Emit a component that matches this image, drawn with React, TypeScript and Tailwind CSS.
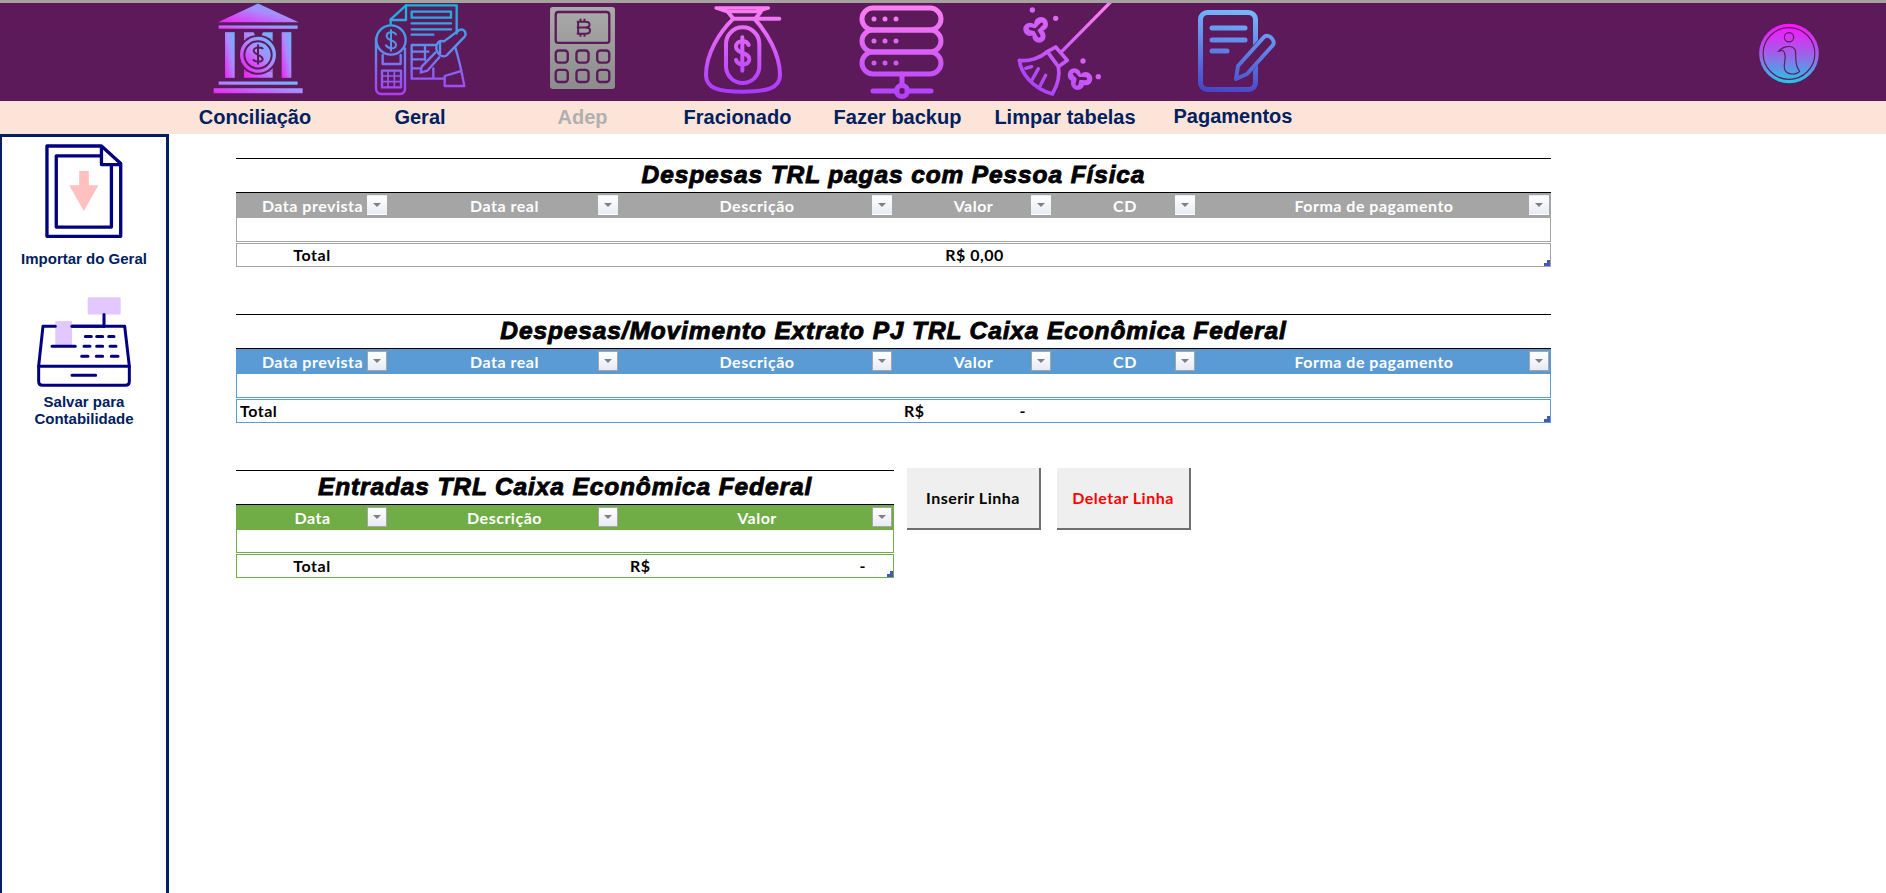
import React from "react";

const navLabel = "font-['Liberation_Sans',Arial,sans-serif] font-bold text-[20px] leading-none text-[#002060] text-center whitespace-nowrap mb-[2px]";
const cellFont = "font-['Lato',sans-serif] font-bold text-[16px] tracking-[0.5px] leading-none";
const gridCols = "grid grid-cols-[175px_160px_170px_155px_155px_165px_170px_166px_1fr]";

function BankIcon() {
  return (
    <svg viewBox="100 8 270 272" className="block w-[90px] h-[91px] ml-[6px] mt-0">
      <defs>
        <linearGradient id="bank" x1="0" y1="1" x2="1" y2="0">
          <stop offset="0" stopColor="#f020f5" />
          <stop offset="0.55" stopColor="#a98cff" />
          <stop offset="1" stopColor="#66b8ff" />
        </linearGradient>
      </defs>
      <g fill="url(#bank)">
        <path d="M235 9L357 65H115Z" />
        <rect x="117" y="75" width="237" height="10" />
        <rect x="136" y="95" width="29" height="137" />
        <rect x="306" y="95" width="29" height="137" />
        <path d="M193 95h29l8 18h12l8-18h29v18h-86zM193 214h86v18h-86z" />
        <path d="M193 113h86v101h-86z" />
      </g>
      <circle cx="235" cy="163" r="60" fill="#5d1a5b" />
      <circle cx="235" cy="163" r="49" fill="none" stroke="url(#bank)" strokeWidth="10" />
      <circle cx="235" cy="163" r="38" fill="url(#bank)" />
      <path d="M250 146c-3-6-26-8-28 4s30 14 27 27c-3 10-24 8-29-1M235 132v60" fill="none" stroke="#5d1a5b" strokeWidth="6" />
      <path d="M117 243h237v10H117zM102 263h267v15H102z" fill="url(#bank)" />
    </svg>
  );
}

function GeralIcon() {
  return (
    <svg viewBox="0 9 315 294" className="block w-[105px] h-[98px] ml-[5px]">
      <defs>
        <linearGradient id="geralU" gradientUnits="userSpaceOnUse" x1="150" y1="12" x2="150" y2="285">
          <stop offset="0" stopColor="#10b8dc" />
          <stop offset="0.5" stopColor="#5f8cf0" />
          <stop offset="1" stopColor="#b03cf8" />
        </linearGradient>
      </defs>
      <g fill="none" stroke="url(#geralU)" strokeWidth="7" strokeLinejoin="round" strokeLinecap="round">
        <path d="M62 72V58L108 16H260V100" />
        <path d="M108 16V60H62" />
        <rect x="125" y="35" width="118" height="18" />
        <path d="M125 70H243M125 88H243M125 104H190" />
        <path d="M125 135H195M125 135V236H222M125 155H175M125 178H165M125 205H150M165 135V180M190 236V205" />
        <path d="M255 140C268 180 276 220 283 258H224V228L270 214" />
        <path d="M200 135C205 122 215 122 222 124L268 90C280 84 292 98 284 110L232 164C225 172 212 170 205 160C198 152 198 143 200 135Z" />
        <path d="M210 124V160" />
        <path d="M196 158L155 200L152 218L172 212L208 172" />
        <path d="M18 115V265Q18 282 35 282H90Q105 282 105 265V145" />
        <circle cx="63" cy="120" r="44" fill="#5d1a5b" />
        <path d="M78 103C70 92 50 95 50 108C50 124 78 118 78 134C78 148 56 148 48 136M63 90V152" strokeWidth="6" />
        <path d="M38 165V192H92V165" />
        <rect x="36" y="212" width="57" height="50" />
        <path d="M54 212V262M73 212V262M36 228H93M36 245H93" strokeWidth="5" />
      </g>
    </svg>
  );
}

function AdepIcon() {
  return (
    <svg viewBox="1112 22 194 245" className="block w-[65px] h-[82px] mt-[4px]">
      <defs>
        <linearGradient id="adep" x1="0" y1="0" x2="0" y2="1">
          <stop offset="0" stopColor="#aaaaaa" />
          <stop offset="1" stopColor="#8c8c8c" />
        </linearGradient>
      </defs>
      <rect x="1112" y="22" width="194" height="245" rx="8" fill="url(#adep)" />
      <g fill="none" stroke="#5d1a5b" strokeWidth="7">
        <rect x="1129" y="37" width="160" height="92" rx="8" />
        <rect x="1129" y="152" width="36" height="36" rx="9" />
        <rect x="1191" y="152" width="36" height="36" rx="9" />
        <rect x="1253" y="152" width="36" height="36" rx="9" />
        <rect x="1129" y="210" width="36" height="36" rx="9" />
        <rect x="1191" y="210" width="36" height="36" rx="9" />
        <rect x="1253" y="210" width="36" height="36" rx="9" />
        <path d="M1192 66H1218C1234 66 1234 83 1218 83H1192M1218 83C1236 83 1236 102 1218 102H1192M1196 66V102M1203 57V66M1215 57V66M1203 102V111M1215 102V111" strokeWidth="6" />
      </g>
    </svg>
  );
}

function BagIcon() {
  return (
    <svg viewBox="0 9 270 294" className="block w-[90px] h-[98px] ml-[15px]">
      <defs>
        <linearGradient id="bag" gradientUnits="userSpaceOnUse" x1="130" y1="15" x2="130" y2="280">
          <stop offset="0" stopColor="#ff80f2" />
          <stop offset="1" stopColor="#a838ff" />
        </linearGradient>
      </defs>
      <g fill="none" stroke="url(#bag)" strokeWidth="12" strokeLinecap="round" strokeLinejoin="round">
        <path d="M48 24C60 26 72 35 84 35H168C180 35 192 26 205 24Z" strokeWidth="10" />
        <path d="M84 36L100 56M182 36L166 56" />
        <path d="M100 56H238" />
        <path d="M98 58C60 95 18 160 18 225C18 265 55 275 128 275C200 275 240 265 240 225C240 160 198 95 165 58" />
        <rect x="78" y="82" width="100" height="167" rx="50" />
        <path d="M146 135C140 118 108 120 108 140C108 162 148 155 148 178C148 198 114 198 108 180M127 112V212" />
      </g>
    </svg>
  );
}

function ServerIcon() {
  return (
    <svg viewBox="858 3 88 96" className="block w-[88px] h-[96px] ml-[8px]">
      <defs>
        <linearGradient id="srv" gradientUnits="userSpaceOnUse" x1="900" y1="5" x2="900" y2="98">
          <stop offset="0" stopColor="#ff80f2" />
          <stop offset="1" stopColor="#b040fa" />
        </linearGradient>
      </defs>
      <g fill="none" stroke="url(#srv)" strokeWidth="5" strokeLinecap="round">
        <rect x="862" y="8" width="79" height="22" rx="11" />
        <rect x="862" y="30" width="79" height="22" rx="11" />
        <rect x="862" y="52" width="79" height="22" rx="11" />
        <path d="M902 74V85M873 91H897M907 91H931" />
        <circle cx="902" cy="91" r="5.500" />
      </g>
      <g fill="url(#srv)">
        <circle cx="874" cy="19" r="2.500" /><circle cx="885" cy="19" r="2.500" /><circle cx="896" cy="19" r="2.500" />
        <circle cx="874" cy="41" r="2.500" /><circle cx="885" cy="41" r="2.500" /><circle cx="896" cy="41" r="2.500" />
        <circle cx="874" cy="63" r="2.500" /><circle cx="885" cy="63" r="2.500" /><circle cx="896" cy="63" r="2.500" />
      </g>
    </svg>
  );
}

function BroomIcon() {
  return (
    <svg viewBox="0 9 315 294" className="block w-[105px] h-[98px] ml-[5px]">
      <defs>
        <linearGradient id="brm" gradientUnits="userSpaceOnUse" x1="270" y1="10" x2="60" y2="280">
          <stop offset="0" stopColor="#ff80f2" />
          <stop offset="1" stopColor="#a840fa" />
        </linearGradient>
      </defs>
      <g fill="none" stroke="url(#brm)" strokeLinecap="round" strokeLinejoin="round">
        <path d="M285 8L140 155" strokeWidth="10" />
        <path d="M97 155L122 141L157 181L130 200Z" strokeWidth="11" />
        <path d="M97 155C75 175 40 185 13 181C18 222 55 265 112 282C125 260 136 230 130 200" strokeWidth="11" />
        <path d="M32 205L50 200M52 238L70 206M75 258L92 226" strokeWidth="10" />
      </g>
      <g fill="url(#brm)">
        <circle cx="78" cy="72" r="21" />
        <circle cx="45" cy="88" r="20" />
        <circle cx="72" cy="108" r="20" />
        <circle cx="178" cy="225" r="20" />
        <circle cx="212" cy="236" r="20" />
        <circle cx="188" cy="250" r="20" />
        <circle cx="52" cy="30" r="8" />
        <circle cx="122" cy="55" r="8" />
        <circle cx="204" cy="183" r="8" />
        <circle cx="250" cy="230" r="8" />
      </g>
      <path d="M62 90L80 72M62 90L46 86M62 90L72 108M190 235L178 222M190 235L212 236M190 235L186 252" stroke="#5d1a5b" strokeWidth="9" strokeLinecap="round" fill="none" />
    </svg>
  );
}

function PaperIcon() {
  return (
    <svg viewBox="1197 8 80 85" className="block w-[80px] h-[85px] ml-[8px] mt-[5px]">
      <defs>
        <linearGradient id="pap" gradientUnits="userSpaceOnUse" x1="1235" y1="10" x2="1225" y2="92">
          <stop offset="0" stopColor="#72b8ff" />
          <stop offset="1" stopColor="#4a45c8" />
        </linearGradient>
      </defs>
      <rect x="1200.500" y="12.500" width="55" height="77" rx="7" fill="none" stroke="url(#pap)" strokeWidth="5" />
      <path d="M1212 28H1245M1212 40H1245M1212 51H1227" stroke="url(#pap)" strokeWidth="5" strokeLinecap="round" />
      <path d="M1264 37L1272 44L1247 74L1236 79L1238 66Z" fill="#5d1a5b" stroke="#5d1a5b" strokeWidth="5" />
      <path d="M1264 37C1268 33 1276 40 1273 45L1247 74L1236 79L1238 66Z" fill="#5d1a5b" stroke="url(#pap)" strokeWidth="4" strokeLinejoin="round" />
    </svg>
  );
}

function InfoIcon() {
  return (
    <svg viewBox="177 68 180 184" className="block w-[60px] h-[61px] mt-[20px]">
      <defs>
        <linearGradient id="inf" x1="0" y1="0" x2="0" y2="1">
          <stop offset="0" stopColor="#ff10ff" />
          <stop offset="0.5" stopColor="#a060e8" />
          <stop offset="1" stopColor="#20c8e8" />
        </linearGradient>
      </defs>
      <circle cx="267" cy="160" r="90" fill="url(#inf)" />
      <g fill="none" stroke="#5d1a5b" strokeWidth="3.500">
        <circle cx="267" cy="160" r="78" />
        <circle cx="267" cy="111" r="14" />
        <path d="M236 153C248 138 278 132 286 150C290 170 282 195 299 213C290 225 262 226 254 208C248 190 264 165 250 152C246 149 240 152 236 153Z" />
      </g>
    </svg>
  );
}

function ImportIcon() {
  return (
    <svg viewBox="130 50 245 295" className="block w-[82px] h-[98px]">
      <g fill="none" stroke="#000080" strokeWidth="10" strokeLinejoin="round">
        <path d="M141 62H305L363 115V334H141Z" />
        <path d="M305 92H169V306H335V118" />
        <path d="M305 62V118H363" />
      </g>
      <path d="M238 137H267V180H296L252 258L208 180H238Z" fill="#ffc0c0" />
    </svg>
  );
}

function RegisterIcon() {
  return (
    <svg viewBox="104 515 288 275" className="block w-[96px] h-[92px]">
      <rect x="259" y="518" width="99" height="52" rx="4" fill="#e2c8ff" />
      <rect x="162" y="590" width="50" height="75" fill="#e2c8ff" />
      <g fill="none" stroke="#000080" strokeWidth="9" strokeLinecap="round" strokeLinejoin="round">
        <path d="M308 570V605" />
        <path d="M162 605H125L112 725H384L370 605H212" />
        <path d="M212 605H308" />
        <path d="M112 725V770Q112 782 124 782H372Q384 782 384 770V725" />
        <path d="M212 752H283M152 665H222" />
        <path d="M252 636H270M286 636H304M322 636H338M248 665H266M286 665H304M326 665H344M241 695H260M285 695H304M330 695H350" />
      </g>
    </svg>
  );
}

function Caret({ border }: { border: string }) {
  return (
    <span className={`flex items-center justify-center w-[20px] h-[20px] border bg-gradient-to-b from-[#ffffff] to-[#e8ebf4] ${border}`}>
      <span className="w-0 h-0 border-l-[4px] border-r-[4px] border-t-[4px] border-l-transparent border-r-transparent border-t-[#808080]" />
    </span>
  );
}

function HeaderCell({ label, border }: { label: string; border: string }) {
  return (
    <div className="flex items-center justify-center relative h-full">
      <span className={`${cellFont} text-white`}>{label}</span>
      <span className="absolute right-[2px] top-[2px]">
        <Caret border={border} />
      </span>
    </div>
  );
}

function ResizeHandle() {
  return (
    <svg viewBox="0 0 6 6" className="absolute right-0 bottom-0 w-[6px] h-[6px]">
      <path d="M0 6V3H3V0H6V6Z" fill="#4158b8" />
    </svg>
  );
}

const sixCols = "grid grid-cols-[153px_231px_274px_159px_144px_1fr]";
const threeCols = "grid grid-cols-[153px_231px_1fr]";
const sixHeads = ["Data prevista", "Data real", "Descrição", "Valor", "CD", "Forma de pagamento"];

function TableShell({
  title,
  heads,
  cols,
  headBg,
  line,
  caret,
  total,
  width,
  bodyHeight = "h-[24px]",
}: {
  title: string;
  heads: string[];
  cols: string;
  headBg: string;
  line: string;
  caret: string;
  total: React.ReactNode;
  width: string;
  bodyHeight?: string;
}) {
  return (
    <div className={width}>
      <div className="border-t border-black h-[34px] flex items-center justify-center">
        <span className="font-['Liberation_Sans',Arial,sans-serif] font-bold italic text-[24.5px] leading-none tracking-[0.88px] text-black [-webkit-text-stroke:0.9px_black] whitespace-nowrap">
          {title}
        </span>
      </div>
      <div className={`${cols} ${headBg} h-[26px] border-t border-black`}>
        {heads.map((h) => (
          <HeaderCell key={h} label={h} border={caret} />
        ))}
      </div>
      <div className={`${bodyHeight} border-x border-b ${line}`} />
      <div className={`relative h-[24px] mt-px border ${line}`}>
        {total}
        <ResizeHandle />
      </div>
    </div>
  );
}

export default function App() {
  return (
    <div className="w-[1886px] h-[893px] overflow-hidden flex flex-col bg-white">
      <div className="h-[3px] bg-[#a6a29e] shrink-0" />
      <div className={`${gridCols} h-[98px] bg-[#5d1a5b] shrink-0 overflow-hidden`}>
        <div />
        <div className="flex justify-center"><BankIcon /></div>
        <div className="flex justify-center"><GeralIcon /></div>
        <div className="flex justify-center"><AdepIcon /></div>
        <div className="flex justify-center"><BagIcon /></div>
        <div className="flex justify-center"><ServerIcon /></div>
        <div className="flex justify-center"><BroomIcon /></div>
        <div className="flex justify-center"><PaperIcon /></div>
        <div className="flex justify-end pr-[67px]"><InfoIcon /></div>
      </div>
      <div className={`${gridCols} h-[33px] bg-[#fde4d8] shrink-0 items-center`}>
        <div />
        <div className={navLabel}>Conciliação</div>
        <div className={navLabel}>Geral</div>
        <div className={`${navLabel} !text-[#b0b0b0]`}>Adep</div>
        <div className={navLabel}>Fracionado</div>
        <div className={navLabel}>Fazer backup</div>
        <div className={navLabel}>Limpar tabelas</div>
        <div className={`${navLabel} !mb-[4px]`}>Pagamentos</div>
        <div />
      </div>
      <div className="flex flex-1 min-h-0">
        <aside className="w-[169px] shrink-0 border-l-2 border-l-[#002060] border-r-[3px] border-r-[#002060] border-t-[3px] border-t-[#002060] flex flex-col items-center font-['Liberation_Sans',Arial,sans-serif] font-bold text-[15px] leading-[17px] text-[#002060] text-center">
          <div className="mt-[5px]"><ImportIcon /></div>
          <div className="mt-[10px]">Importar do Geral</div>
          <div className="mt-[29px]"><RegisterIcon /></div>
          <div className="mt-[5px]">Salvar para<br />Contabilidade</div>
        </aside>
        <main className="flex-1 pl-[67px] pt-[24px] flex flex-col gap-[47px]">
          <TableShell
            width="w-[1315px]"
            title="Despesas TRL pagas com Pessoa Física"
            heads={sixHeads}
            cols={sixCols}
            headBg="bg-[#a5a5a5]"
            line="border-[#a5a5a5]"
            caret="border-transparent"
            total={
              <div className={`${sixCols} h-full items-center ${cellFont} text-black`}>
                <div className="text-center pr-[3px]">Total</div>
                <div />
                <div />
                <div className="text-center">R$ 0,00</div>
              </div>
            }
          />
          <TableShell
            width="w-[1315px]"
            title="Despesas/Movimento Extrato PJ TRL Caixa Econômica Federal"
            heads={sixHeads}
            cols={sixCols}
            headBg="bg-[#5b9bd5]"
            line="border-[#5b9bd5]"
            caret="border-[#a5a5a5]"
            total={
              <div className={`${sixCols} h-full items-center ${cellFont} text-black`}>
                <div className="pl-[3px]">Total</div>
                <div />
                <div />
                <div className="flex justify-between pl-[9px] pr-[28px]"><span>R$</span><span>-</span></div>
              </div>
            }
          />
          <div className="flex items-start">
            <TableShell
              width="w-[658px]"
              bodyHeight="h-[23px]"
              title="Entradas TRL Caixa Econômica Federal"
              heads={["Data", "Descrição", "Valor"]}
              cols={threeCols}
              headBg="bg-[#70ad47]"
              line="border-[#70ad47]"
              caret="border-[#a5a5a5]"
              total={
                <div className={`${threeCols} h-full items-center ${cellFont} text-black`}>
                  <div className="text-center pr-[3px]">Total</div>
                  <div />
                  <div className="flex justify-between pl-[9px] pr-[27px]"><span>R$</span><span>-</span></div>
                </div>
              }
            />
            <div className="flex gap-[16px] ml-[13px] -mt-[2px]">
              <button className={`w-[134px] h-[62px] bg-[#efefef] border-r-2 border-b-2 border-[#6f6f6f] ${cellFont} text-black`}>Inserir Linha</button>
              <button className={`w-[134px] h-[62px] bg-[#efefef] border-r-2 border-b-2 border-[#6f6f6f] ${cellFont} text-[#ff0000]`}>Deletar Linha</button>
            </div>
          </div>
        </main>
      </div>
    </div>
  );
}
